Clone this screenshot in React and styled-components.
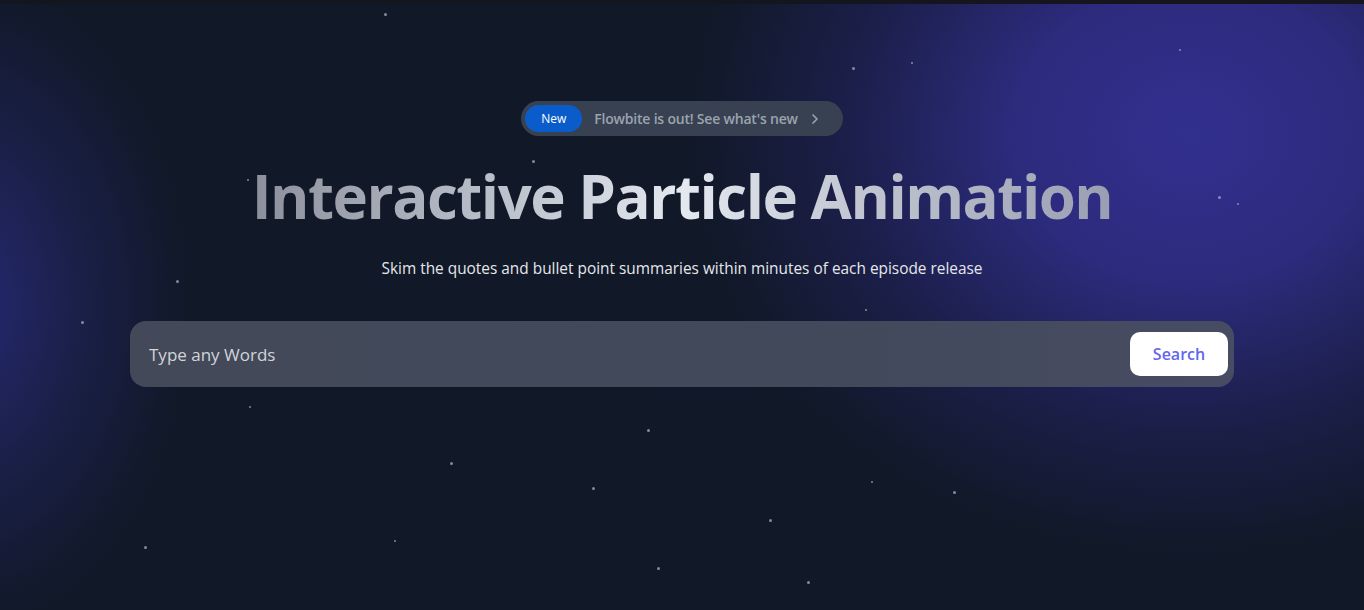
import styled, { createGlobalStyle } from "styled-components";
import { ChevronRight } from "lucide-react";

const particles = [
  [385, 14, 3], [853, 68, 3], [912, 63, 2], [1180, 50, 2], [533, 161, 3],
  [248, 180, 2], [1219, 197, 3], [1238, 204, 2], [177, 281, 3], [82, 322, 3],
  [207, 338, 3], [338, 373, 3], [866, 310, 2], [250, 407, 2], [648, 430, 3],
  [451, 463, 3], [593, 488, 3], [872, 482, 2], [954, 492, 3], [770, 520, 3],
  [145, 547, 3], [395, 541, 2], [658, 568, 3], [808, 582, 3],
];

function App() {
  return (
    <Page>
      <GlobalStyle />
      <TopBar />
      <Hero>
        {particles.map(([x, y, s], i) => (
          <Particle key={i} style={{ left: x - s / 2, top: y - 4 - s / 2, width: s, height: s }} />
        ))}
        <Content>
          <Badge href="#">
            <BadgeTag>New</BadgeTag>
            <BadgeText>Flowbite is out! See what's new</BadgeText>
            <Chevron size={16} strokeWidth={2.5} />
          </Badge>
          <Title>Interactive Particle Animation</Title>
          <Subtitle>
            Skim the quotes and bullet point summaries within minutes of each episode release
          </Subtitle>
          <SearchBar>
            <SearchInput placeholder="Type any Words" />
            <SearchButton>Search</SearchButton>
          </SearchBar>
        </Content>
      </Hero>
    </Page>
  );
}

const GlobalStyle = createGlobalStyle`
  html, body {
    margin: 0;
    padding: 0;
    background: #111827;
  }
  body {
    font-family: "Open Sans", "Noto Sans", sans-serif;
  }
`;

const Page = styled.div`
  display: flex;
  flex-direction: column;
  height: 100vh;
  overflow: hidden;
`;

const TopBar = styled.div`
  height: 4px;
  flex-shrink: 0;
  background: #15151f;
`;

const Hero = styled.section`
  position: relative;
  flex: 1;
  background:
    radial-gradient(ellipse 500px 420px at 1190px 130px, rgba(50, 48, 142, 1) 0%, rgba(47, 45, 135, 0.9) 35%, rgba(38, 38, 110, 0.5) 68%, rgba(17, 24, 39, 0) 100%),
    radial-gradient(ellipse 230px 330px at -40px 300px, rgba(40, 42, 120, 0.95) 0%, rgba(34, 38, 100, 0.5) 55%, rgba(17, 24, 39, 0) 100%),
    #111827;
`;

const Particle = styled.span`
  position: absolute;
  border-radius: 50%;
  background: rgba(170, 175, 195, 0.75);
`;

const Content = styled.div`
  position: relative;
  display: flex;
  flex-direction: column;
  align-items: center;
  padding: 97px 130px 0;
`;

const Badge = styled.a`
  display: flex;
  align-items: center;
  height: 35px;
  box-sizing: border-box;
  padding: 4px 20px 4px 4px;
  border-radius: 999px;
  background: #374151;
  text-decoration: none;
`;

const BadgeTag = styled.span`
  display: flex;
  align-items: center;
  justify-content: center;
  width: 57px;
  height: 27px;
  border-radius: 999px;
  background: #0b5ccb;
  color: #ffffff;
  font-size: 12px;
  font-weight: 500;
`;

const BadgeText = styled.span`
  margin-left: 12px;
  color: #9ca3af;
  font-size: 14px;
  font-weight: 600;
  letter-spacing: -0.2px;
`;

const Chevron = styled(ChevronRight)`
  margin-left: 9px;
  color: #9ca3af;
`;

const Title = styled.h1`
  margin: 23px 0 0;
  font-size: 60px;
  line-height: 74px;
  font-weight: 700;
  letter-spacing: -1.5px;
  background: linear-gradient(90deg, #8b909c 0%, #c6ccd6 35%, #e4e8ef 50%, #c2c7d2 70%, #9a9eb2 100%);
  -webkit-background-clip: text;
  background-clip: text;
  color: transparent;
`;

const Subtitle = styled.p`
  margin: 24px 0 0;
  color: #e5e7eb;
  font-size: 15.4px;
  line-height: 24px;
  font-weight: 400;
`;

const SearchBar = styled.div`
  display: flex;
  align-items: center;
  align-self: stretch;
  height: 66px;
  margin-top: 40px;
  box-sizing: border-box;
  padding: 0 6px 0 17px;
  border-radius: 16px;
  background: linear-gradient(90deg, #434959 0%, #41495a 60%, #484c63 100%);
`;

const SearchInput = styled.input`
  flex: 1;
  border: none;
  outline: none;
  background: transparent;
  font-family: inherit;
  font-size: 17px;
  color: #e5e7eb;

  &::placeholder {
    color: #d1d5db;
  }
`;

const SearchButton = styled.button`
  width: 98px;
  height: 44px;
  border: none;
  border-radius: 10px;
  background: #ffffff;
  color: #6366f1;
  font-family: inherit;
  font-size: 16px;
  font-weight: 600;
  cursor: pointer;
`;

export default App;
